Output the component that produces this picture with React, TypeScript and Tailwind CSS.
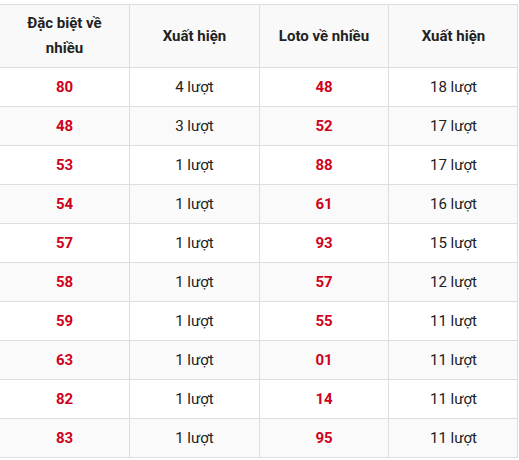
const rows: [string, string, string, string][] = [
  ['80', '4 lượt', '48', '18 lượt'],
  ['48', '3 lượt', '52', '17 lượt'],
  ['53', '1 lượt', '88', '17 lượt'],
  ['54', '1 lượt', '61', '16 lượt'],
  ['57', '1 lượt', '93', '15 lượt'],
  ['58', '1 lượt', '57', '12 lượt'],
  ['59', '1 lượt', '55', '11 lượt'],
  ['63', '1 lượt', '01', '11 lượt'],
  ['82', '1 lượt', '14', '11 lượt'],
  ['83', '1 lượt', '95', '11 lượt'],
];

const headers = ['Đặc biệt về nhiều', 'Xuất hiện', 'Loto về nhiều', 'Xuất hiện'];

export default function App() {
  return (
    <div className="bg-white w-[519px] h-[460px] pt-[4px] font-['Roboto',sans-serif] text-[15px] text-[#222]">
      <div className="w-[518px] border-t border-r border-[#dddddd]">
        {/* Header */}
        <div className="grid grid-cols-[129px_130px_129px_130px] bg-[#f9f9f9] border-b border-[#dddddd]">
          {headers.map((h, i) => (
            <div
              key={i}
              className={`h-[62px] flex items-center justify-center text-center px-[12px] font-bold text-[15px] leading-[25px] ${i > 0 ? 'border-l border-[#dddddd]' : ''}`}
            >
              {h}
            </div>
          ))}
        </div>
        {/* Body */}
        {rows.map((r, ri) => (
          <div
            key={ri}
            className={`grid grid-cols-[129px_130px_129px_130px] border-b border-[#dddddd] ${ri % 2 === 1 ? 'bg-[#fafafa]' : 'bg-white'}`}
          >
            {r.map((c, ci) => (
              <div
                key={ci}
                className={`h-[38px] flex items-center justify-center ${ci > 0 ? 'border-l border-[#dddddd]' : ''} ${ci % 2 === 0 ? 'font-bold text-[#d0021b]' : ''}`}
              >
                {c}
              </div>
            ))}
          </div>
        ))}
      </div>
    </div>
  );
}
